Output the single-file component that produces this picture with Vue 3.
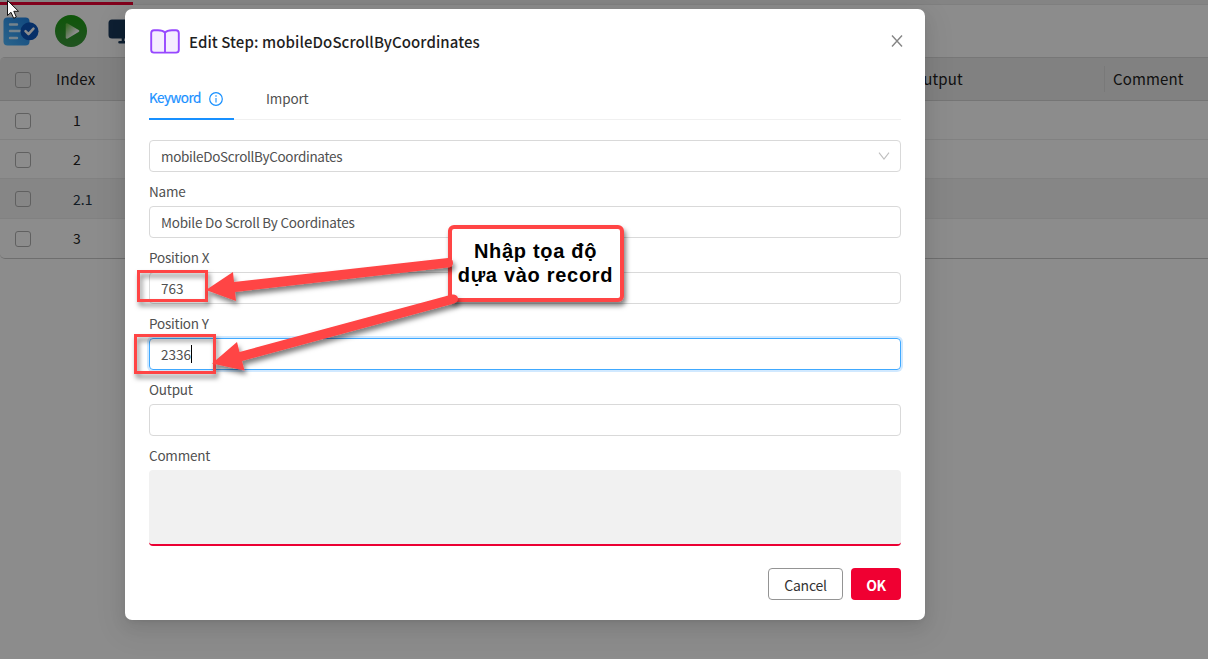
<script setup>
const rows = [
  { index: '1' },
  { index: '2' },
  { index: '2.1', nested: true },
  { index: '3' },
]
const fields = [
  { label: 'Name', value: 'Mobile Do Scroll By Coordinates', cls: 'name' },
  { label: 'Position X', value: '763', cls: 'num' },
  { label: 'Position Y', value: '2336', cls: 'num', focused: true },
  { label: 'Output', value: '', cls: '' },
]
</script>

<template>
  <div class="app">
    <main class="page">
      <div class="strip"><div class="progress"></div></div>
      <div class="toolbar">
        <svg class="tool steps" width="36" height="30" viewBox="0 0 36 30">
          <defs>
            <linearGradient id="doc" x1="0" y1="1" x2="1" y2="0">
              <stop offset="0" stop-color="#4db8ff" /><stop offset="1" stop-color="#1e82e6" />
            </linearGradient>
          </defs>
          <rect x="0.5" y="0.5" width="26" height="28" rx="4" fill="url(#doc)" />
          <path d="M7 7.5h7M7 14h10M7 21h7" stroke="#d5efff" stroke-width="2.4" stroke-linecap="round" />
          <circle cx="26.5" cy="14.3" r="9" fill="#0b57bd" />
          <path d="M22.5 14.2l3 3 5-5.5" fill="none" stroke="#fff" stroke-width="2.5" stroke-linecap="round" stroke-linejoin="round" />
        </svg>
        <svg class="tool" width="32" height="32" viewBox="0 0 32 32">
          <defs>
            <linearGradient id="play" x1="0" y1="0" x2="0" y2="1">
              <stop offset="0" stop-color="#1c9d12" /><stop offset="1" stop-color="#3c963c" />
            </linearGradient>
            <linearGradient id="tri" x1="0" y1="0" x2="1" y2="1">
              <stop offset="0" stop-color="#6cc04a" /><stop offset=".7" stop-color="#fff" />
            </linearGradient>
          </defs>
          <circle cx="16" cy="16" r="16" fill="url(#play)" />
          <path d="M12 9.5v13l11-6.5z" fill="url(#tri)" stroke="url(#tri)" stroke-width="2.6" stroke-linejoin="round" />
        </svg>
        <svg class="tool monitor" width="34" height="26" viewBox="0 0 34 26">
          <rect x="0.5" y="0.5" width="33" height="19" rx="3.5" fill="#1b3a5c" />
          <path d="M15 19v4M11.5 23.3h11" stroke="#1b3a5c" stroke-width="2.6" stroke-linecap="round" />
        </svg>
      </div>
      <div class="table">
        <div class="row head">
          <span class="check"></span><span class="index">Index</span>
          <span class="out">Output</span><span class="comment">Comment</span>
        </div>
        <div v-for="r in rows" :key="r.index" class="row" :class="{ nested: r.nested }">
          <span class="check"></span><span class="index">{{ r.index }}</span>
        </div>
      </div>
    </main>

    <div class="mask">
      <section class="modal">
        <header>
          <svg width="30" height="25" viewBox="0 0 30 25">
            <path d="M15 3.6C13.5 1.8 11 1.2 8 1.2H4Q1.2 1.2 1.2 4V21Q1.2 23.6 4 23.6H26Q28.8 23.6 28.8 21V4Q28.8 1.2 26 1.2H22C19 1.2 16.5 1.8 15 3.6ZM15 3.6V23.4" fill="#f5edff" stroke="#9747ff" stroke-width="1.9" stroke-linejoin="round" />
          </svg>
          <h1>Edit Step: mobileDoScrollByCoordinates</h1>
          <svg class="close" width="12" height="12" viewBox="0 0 12 12">
            <path d="M1 0.5L11 11.5M11 0.5L1 11.5" stroke="#858585" stroke-width="1.4" />
          </svg>
        </header>
        <nav>
          <div class="tab active">
            <span>Keyword</span>
            <svg width="14" height="14" viewBox="0 0 14 14">
              <circle cx="7" cy="7" r="6.3" fill="none" stroke="#1890ff" stroke-width="1.2" />
              <path d="M7 6v4.5" stroke="#1890ff" stroke-width="1.1" /><circle cx="7" cy="4" r=".8" fill="#1890ff" />
            </svg>
          </div>
          <div class="tab">Import</div>
        </nav>
        <div class="control select">
          <span class="keyword">mobileDoScrollByCoordinates</span>
          <svg width="12" height="8" viewBox="0 0 12 8"><path d="M1 .7L6 7L11 .7" fill="none" stroke="#bfbfbf" stroke-width="1.1" /></svg>
        </div>
        <div v-for="f in fields" :key="f.label" class="field">
          <label>{{ f.label }}</label>
          <div class="control" :class="{ focused: f.focused }">
            <span :class="f.cls">{{ f.value }}</span><i v-if="f.focused" class="caret"></i>
          </div>
        </div>
        <div class="field">
          <label>Comment</label>
          <div class="textarea"></div>
        </div>
        <footer>
          <button class="cancel">Cancel</button>
          <button class="ok">OK</button>
        </footer>
      </section>
    </div>

    <svg class="marks" width="1208" height="659" viewBox="0 0 1208 659">
      <defs>
        <filter id="shade" x="-10%" y="-20%" width="125%" height="150%">
          <feDropShadow dx="2" dy="4" stdDeviation="2.4" flood-color="#000" flood-opacity=".5" />
        </filter>
      </defs>
      <g filter="url(#shade)">
        <rect x="138.5" y="271.5" width="68" height="29" fill="none" stroke="#ff4444" stroke-width="3" />
        <rect x="135.5" y="335.5" width="79" height="37" fill="none" stroke="#ff4444" stroke-width="3" />
      </g>
      <rect x="450" y="227" width="172" height="73" rx="4" fill="#fff" stroke="#ff4444" stroke-width="4" filter="url(#shade)" />
      <g filter="url(#shade)" fill="#ff4444">
        <path d="M206 290L233 272L234 282L448 258Q453 258 453 263Q453 267 448 267.5L235 292L236 301Z" />
        <path d="M212 363.500L237 342L239.500 352L452 294.500Q457 294 458 298Q458 302 454 303.500L242 361L244.500 370.500Z" />
      </g>
      <path d="M7.500 .5V15.500L11 12.300L13.700 18.300L16.300 17L13.800 11.300H18.500Z" fill="#fff" stroke="#111" stroke-width="1" />
    </svg>
    <div class="callout">Nhập tọa độ<br />dựa vào record</div>
  </div>
</template>

<style>
body { background: #f5f5f5; overflow: hidden; }
</style>
<style scoped>
* { box-sizing: border-box; }
.app { position: relative; width: 1208px; height: 659px; overflow: hidden; font-family: "Noto Sans CJK JP", "Noto Sans", sans-serif; font-size: 14px; color: #505050; }
.page { height: 100%; background: #fff; }
.strip { height: 5px; padding-top: 2px; background: #f0f0f0; border-bottom: 1px solid #e8e8e8; }
.progress { width: 133px; height: 3px; background: #eb0033; }
.toolbar { height: 52px; display: flex; align-items: flex-start; padding: 10px 0 0 3px; gap: 16px; }
.steps { margin-top: 2px; }
.monitor { margin: 4px 0 0 5px; }
.table { border-top: 1px solid #d9d9d9; border-bottom: 1px solid #c9c9c9; border-radius: 5px 0 0 5px; overflow: hidden; height: 202px; }
.row { height: 39px; display: flex; align-items: center; padding-left: 15px; border-bottom: 1px solid #ebebeb; color: #222; }
.row.nested { height: 40px; background: #f4f4f4; color: #234; }
.row.head { height: 43px; background: #ebebeb; border-color: #d5d5d5; font-size: 15px; font-weight: 400; letter-spacing: .15px; }
.row:last-child { height: 40px; }
.row:last-child .index { padding-bottom: 1px; line-height: 19px; }
.check { width: 16px; height: 16px; border: 1px solid #b0b0b0; border-radius: 3px; position: relative; top: 1px; }
.nested .check, .row:last-child .check { top: 0; }
.index { margin-left: 42px; line-height: 20px; }
.head .index { margin-left: 25px; width: 856px; line-height: 22px; }
.out { width: 192px; line-height: 22px; padding-bottom: 1px; }
.comment { height: 26px; line-height: 26px; padding-left: 8px; border-left: 1px solid #dcdcdc; }
.mask { position: absolute; inset: 0; background: rgba(0, 0, 0, .45); padding: 9px 0 0 125px; }
.modal { width: 800px; height: 611px; padding: 20px 24px; border-radius: 7px; background: #fff; box-shadow: 0 3px 6px -4px rgba(0,0,0,.12), 0 6px 16px rgba(0,0,0,.08), 0 9px 28px 8px rgba(0,0,0,.05); }
header { height: 25px; display: flex; align-items: center; padding-left: 1px; }
h1 { margin: 0 0 0 9px; font-size: 15px; line-height: 25px; font-weight: 500; letter-spacing: .08px; color: #1f1f1f; }
.close { margin: -2px -2px 0 auto; }
nav { height: 45px; margin: 21px 0 20px; display: flex; gap: 32px; border-bottom: 1px solid #f0f0f0; }
.tab { height: 45px; line-height: 44px; display: flex; align-items: center; font-size: 13.500px; letter-spacing: -.15px; }
.active { width: 85px; gap: 8px; color: #1890ff; border-bottom: 2px solid #1890ff; line-height: 46px; letter-spacing: -.55px; -webkit-text-stroke: .2px #1890ff; }
.active svg { margin-top: 4px; }
.control { height: 32px; border: 1px solid #d9d9d9; border-radius: 4px; padding: 0 11px; display: flex; align-items: center; line-height: 20px; font-size: 13.500px; }
.select { justify-content: space-between; }
.keyword { letter-spacing: -.31px; }
.name { letter-spacing: -.21px; }
.select svg { margin-top: -1px; margin-right: -1px; }
.focused { border-color: #40a9ff; box-shadow: 0 0 0 2px rgba(24,144,255,.2); }
.caret { width: 1px; height: 18px; background: #000; }
.field { padding-top: 9px; }
.field label { display: block; height: 25px; line-height: 20px; font-size: 13.500px; letter-spacing: -.22px; }
.textarea { height: 76px; background: #f1f1f1; border-bottom: 2px solid #eb0033; border-radius: 4px; }
footer { display: flex; justify-content: flex-end; gap: 8px; margin-top: 22px; }
button { height: 32px; padding: 2px 0 0; border-radius: 4px; font: 14px "Noto Sans CJK JP", sans-serif; line-height: 28px; }
.cancel { width: 75px; border: 1px solid #949494; background: #fff; color: #333; letter-spacing: -.25px; }
.ok { width: 50px; border: 0; background: #f00032; color: #fff; font-weight: 700; letter-spacing: -.5px; }
.marks { position: absolute; inset: 0; }
.callout { position: absolute; left: 450px; top: 239px; width: 171px; text-align: center; white-space: nowrap; font: bold 20px/24px "Liberation Sans", Arial, sans-serif; letter-spacing: .7px; color: #000; }
</style>
